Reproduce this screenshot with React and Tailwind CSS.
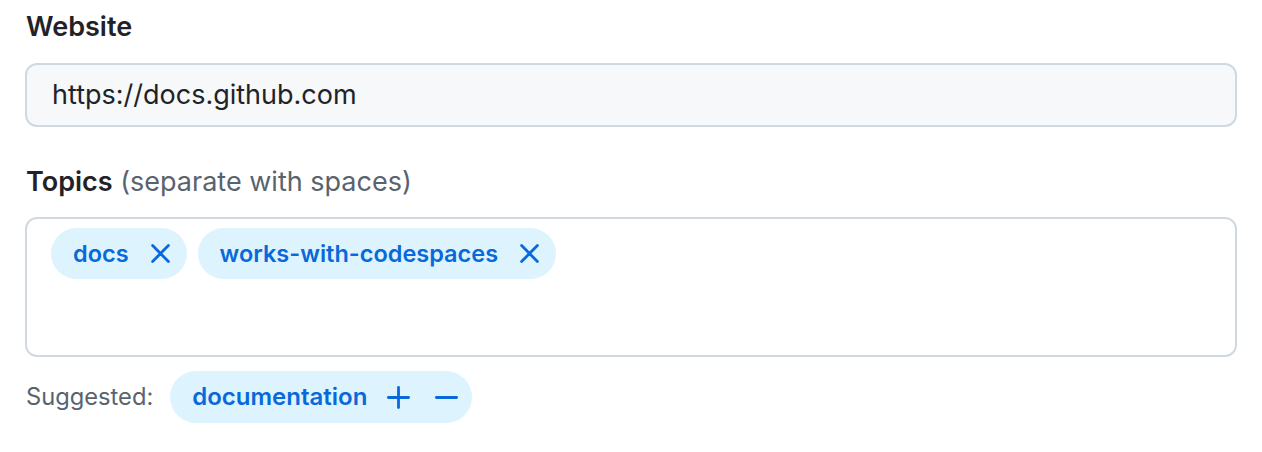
import React from 'react';

const XIcon = () => (
  <svg width="19" height="19" viewBox="0 0 19 19" fill="none" stroke="currentColor" strokeWidth="2.8" strokeLinecap="round">
    <path d="M1.6 1.6 17.4 17.4M17.4 1.6 1.6 17.4" />
  </svg>
);

const PlusIcon = () => (
  <svg width="23" height="23" viewBox="0 0 23 23" fill="none" stroke="currentColor" strokeWidth="2.8" strokeLinecap="round">
    <path d="M11.5 1.4v20.2M1.4 11.5h20.2" />
  </svg>
);

const DashIcon = () => (
  <svg width="23" height="23" viewBox="0 0 23 23" fill="none" stroke="currentColor" strokeWidth="2.8" strokeLinecap="round">
    <path d="M1.4 11.5h20.2" />
  </svg>
);

const Topic = ({ name }) => (
  <span className="inline-flex items-center h-[51px] rounded-full bg-[#ddf4ff] text-[#0969da] pl-[22px] pr-[17px] gap-[22px] font-semibold text-[23.5px]">
    {name}
    <XIcon />
  </span>
);

export default function App() {
  return (
    <div className="bg-white w-[1262px] h-[452px] px-[25px] pt-[10px] text-[#1f2328]" style={{ fontFamily: 'Inter, "Noto Sans", sans-serif' }}>
      <div className="text-[27px] font-semibold leading-[34px] pl-[1px]">Website</div>
      <div className="mt-[19px] h-[64px] rounded-[12px] border-2 border-[#d1d9e0] bg-[#f6f8fa] flex items-center px-[25px] text-[27px]">
        https://docs.github.com
      </div>
      <div className="mt-[38px] text-[27px] leading-[34px] pl-[1px]">
        <span className="font-semibold">Topics</span>{' '}
        <span className="text-[#59636e]">(separate with spaces)</span>
      </div>
      <div className="mt-[18px] h-[140px] rounded-[12px] border-2 border-[#d1d9e0] bg-white pt-[9px] pl-[24px] flex items-start gap-[11px]">
        <Topic name="docs" />
        <Topic name="works-with-codespaces" />
      </div>
      <div className="mt-[14px] flex items-center gap-[17px]">
        <span className="text-[23.7px] text-[#59636e] pl-[1px]">Suggested:</span>
        <span className="inline-flex items-center h-[52px] rounded-full bg-[#ddf4ff] text-[#0969da] pl-[22px] pr-[14px] font-semibold text-[24px]">
          documentation
          <span className="ml-[20px] flex"><PlusIcon /></span>
          <span className="ml-[25px] flex"><DashIcon /></span>
        </span>
      </div>
    </div>
  );
}
